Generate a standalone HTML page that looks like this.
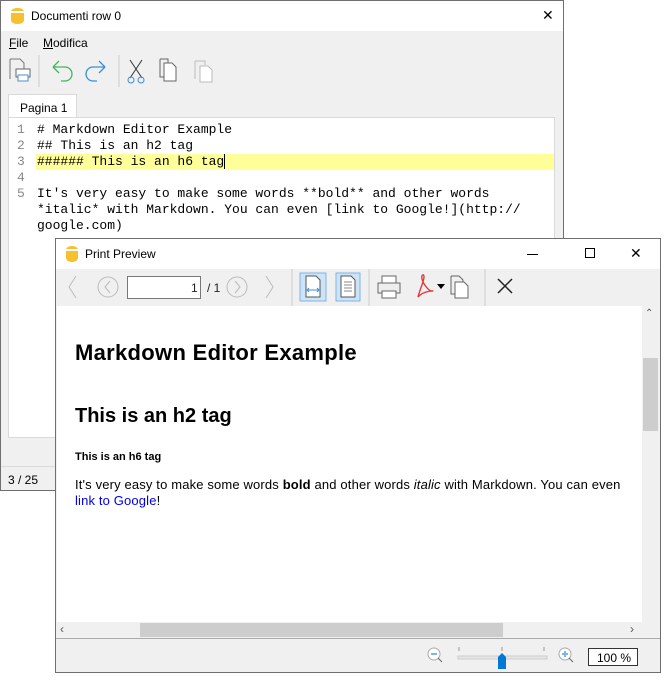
<!DOCTYPE html>
<html><head><style>
*{margin:0;padding:0;box-sizing:border-box}
body{width:665px;height:680px;background:#fff;position:relative;overflow:hidden;font-family:"Liberation Sans",sans-serif;font-size:12px;color:#000}
.abs{position:absolute}
.mono{font-family:"Liberation Mono",monospace;font-size:13px}
</style></head><body>
<!-- main window -->
<div class="abs" style="left:0;top:0;width:564px;height:491px;border:1px solid #6f6f6f;background:#f0f0f0">
 <div class="abs" style="left:0;top:0;width:562px;height:30px;background:#fff">
  <div class="abs" style="left:10px;top:7px;width:13px;height:16px;background:#f7c02e;border-radius:6px/4px"></div>
  <div class="abs" style="left:10px;top:10px;width:13px;height:2px;background:#fff"></div>
  <div class="abs" style="left:30px;top:8px;font-size:12px">Documenti row 0</div>
  <div class="abs" style="left:541px;top:6px;font-size:14px">✕</div>
 </div>
 <div class="abs" style="left:8px;top:35px"><u>F</u>ile</div>
 <div class="abs" style="left:42px;top:35px"><u>M</u>odifica</div>
 <svg class="abs" style="left:4px;top:54px" width="220" height="32">
  <path d="M5 4h10l4 4v8M5 4v20" fill="none" stroke="#777"/><rect x="11" y="14" width="14" height="8" fill="#fff" stroke="#666"/><rect x="13" y="20" width="10" height="6" fill="#fff" stroke="#4a8fc9"/>
  <line x1="34" y1="0" x2="34" y2="32" stroke="#ccc"/>
  <path d="M48 12h12a7 7 0 0 1 0 14h-4M48 12l6-6M48 12l6 6" fill="none" stroke="#43b35e" stroke-width="1.3"/>
  <path d="M100 12h-12a7 7 0 0 0 0 14h4M100 12l-6-6M100 12l-6 6" fill="none" stroke="#3b8fd6" stroke-width="1.3"/>
  <line x1="114" y1="0" x2="114" y2="32" stroke="#ccc"/>
  <path d="M125 5l12 18M137 5l-12 18" stroke="#333"/><circle cx="126" cy="25" r="3" fill="none" stroke="#3b8fd6"/><circle cx="136" cy="25" r="3" fill="none" stroke="#3b8fd6"/>
  <path d="M155 4h8v4M155 4v18h4" fill="none" stroke="#666"/><path d="M159 8h8l4 4v14h-12z" fill="#fff" stroke="#666"/>
  <path d="M190 6h10v4M190 6v18" fill="none" stroke="#bbb"/><path d="M195 11h8l4 4v12h-12z" fill="#fff" stroke="#bbb"/>
 </svg>
 <div class="abs" style="left:7px;top:93px;width:69px;height:25px;background:#fff;border:1px solid #d9d9d9;border-bottom:none;padding:6px 0 0 11px;white-space:nowrap">Pagina 1</div>
 <div class="abs" style="left:7px;top:116px;width:547px;height:321px;background:#fff;border:1px solid #d9d9d9"></div>
 <div class="abs" style="left:35px;top:153px;width:518px;height:16px;background:#ffff99"></div>
 <div class="abs mono" style="left:16px;top:121px;line-height:16px;color:#888">1<br>2<br>3<br>4<br>5</div>
 <div class="abs mono" style="left:36px;top:121px;line-height:16px;white-space:pre"># Markdown Editor Example
## This is an h2 tag
###### This is an h6 tag<span style="border-left:1px solid #000"></span>

It's very easy to make some words **bold** and other words
*italic* with Markdown. You can even [link to Google!](http://
google.com)</div>
 <div class="abs" style="left:0;top:465px;width:562px;border-top:1px solid #d9d9d9"></div>
 <div class="abs" style="left:7px;top:472px">3 / 25</div>
</div>
<!-- preview window -->
<div class="abs" style="left:55px;top:238px;width:606px;height:435px;border:1px solid #6f6f6f;background:#f0f0f0">
 <div class="abs" style="left:0;top:0;width:604px;height:30px;background:#fff">
  <div class="abs" style="left:10px;top:7px;width:12px;height:16px;background:#f7c02e;border-radius:6px/4px"></div>
  <div class="abs" style="left:10px;top:10px;width:12px;height:2px;background:#fff"></div>
  <div class="abs" style="left:29px;top:8px">Print Preview</div>
  <div class="abs" style="left:471px;top:15px;width:11px;height:1px;background:#000"></div>
  <div class="abs" style="left:529px;top:9px;width:10px;height:10px;border:1px solid #000"></div>
  <div class="abs" style="left:574px;top:6px;font-size:14px">✕</div>
 </div>
 <svg class="abs" style="left:0;top:30px" width="604" height="37">
  <path d="M20 7l-7 11 7 11" fill="none" stroke="#bbb"/>
  <circle cx="52" cy="18" r="10" fill="none" stroke="#bbb"/><path d="M54 12l-5 6 5 6" fill="none" stroke="#bbb"/>
  <rect x="71.5" y="7.5" width="73" height="22" fill="#fff" stroke="#777"/>
  <text x="135" y="23" font-size="12" font-family="Liberation Sans" fill="#222">1</text>
  <text x="151" y="23" font-size="12" font-family="Liberation Sans" fill="#222">/ 1</text>
  <circle cx="181" cy="18" r="10" fill="none" stroke="#bbb"/><path d="M179 12l5 6-5 6" fill="none" stroke="#bbb"/>
  <path d="M210 7l7 11-7 11" fill="none" stroke="#bbb"/>
  <line x1="236" y1="0" x2="236" y2="37" stroke="#ccc"/>
  <rect x="244" y="4" width="26" height="28" fill="#cde4f7" stroke="#7eb4ea"/><path d="M250 7h10l4 4v17h-14z" fill="#fff" stroke="#555"/><path d="M251 21h12M251 21l2-2M251 21l2 2M263 21l-2-2M263 21l-2 2" stroke="#3b8fd6"/>
  <rect x="280" y="4" width="24" height="28" fill="#cde4f7" stroke="#7eb4ea"/><path d="M285 7h10l4 4v17h-14z" fill="#fff" stroke="#555"/><path d="M288 13h8M288 16h8M288 19h8M288 22h8" stroke="#888"/>
  <line x1="313" y1="0" x2="313" y2="37" stroke="#ccc"/>
  <rect x="322" y="14" width="22" height="10" fill="#eee" stroke="#666"/><rect x="326" y="7" width="14" height="7" fill="#fff" stroke="#666"/><rect x="326" y="22" width="14" height="7" fill="#fff" stroke="#666"/>
  <path d="M362 28c2-8 6-16 6-20s-3-2-2 2 6 12 10 12-8-1-14 6z" fill="none" stroke="#e03a3a" stroke-width="1.4"/>
  <path d="M381 15h8l-4 5z" fill="#000"/>
  <path d="M395 7h8l4 4v3M395 7v18h4" fill="none" stroke="#666"/><path d="M399 13h9l4 4v12h-13z" fill="#fff" stroke="#666"/>
  <line x1="429" y1="0" x2="429" y2="37" stroke="#ccc"/>
  <path d="M442 10l14 14M456 10l-14 14" stroke="#222" stroke-width="1.5"/>
 </svg>
 <div class="abs" style="left:1px;top:67px;width:585px;height:316px;background:#fff">
  <div class="abs" style="left:18px;top:34px;font-size:22px;font-weight:bold;letter-spacing:0.3px">Markdown Editor Example</div>
  <div class="abs" style="left:18px;top:99px;font-size:20px;font-weight:bold">This is an h2 tag</div>
  <div class="abs" style="left:18px;top:145px;font-size:11px;font-weight:bold">This is an h6 tag</div>
  <div class="abs" style="left:18px;top:171px;font-size:13px;line-height:16px;width:555px;letter-spacing:0.15px">It's very easy to make some words <b>bold</b> and other words <i>italic</i> with Markdown. You can even <span style="color:#00e">link to Google</span>!</div>
 </div>
 <div class="abs" style="left:586px;top:67px;width:17px;height:316px;background:#f0f0f0">
  <div class="abs" style="left:3px;top:2px;font-size:10px;color:#555">⌃</div>
  <div class="abs" style="left:1px;top:52px;width:15px;height:73px;background:#cdcdcd"></div>
 </div>
 <div class="abs" style="left:1px;top:383px;width:585px;height:16px;background:#f0f0f0">
  <div class="abs" style="left:83px;top:1px;width:363px;height:14px;background:#cdcdcd"></div>
  <div class="abs" style="left:3px;top:0;font-size:12px;color:#555">‹</div>
  <div class="abs" style="left:573px;top:0;font-size:12px;color:#555">›</div>
 </div>
 <div class="abs" style="left:0;top:399px;width:604px;border-top:1px solid #aaa"></div>
 <svg class="abs" style="left:370px;top:405px" width="230" height="26">
  <circle cx="8" cy="10" r="6" fill="#fff" stroke="#aaa"/><path d="M5 10h6" stroke="#7eb4ea" stroke-width="2"/><path d="M12 14l4 4" stroke="#666"/>
  <rect x="32" y="12" width="89" height="3" fill="#e6e6e6" stroke="#ccc"/>
  <path d="M33 3v4M76 3v4M118 3v4" stroke="#999"/>
  <path d="M72 13l4-4 4 4v12h-8z" fill="#0078d7"/>
  <circle cx="139" cy="10" r="6" fill="#fff" stroke="#aaa"/><path d="M136 10h6M139 7v6" stroke="#7eb4ea" stroke-width="2"/><path d="M143 14l4 4" stroke="#666"/>
  <rect x="162.5" y="4.5" width="49" height="17" fill="#fff" stroke="#333"/>
  <text x="171" y="18" font-size="12" font-family="Liberation Sans">100 %</text>
 </svg>
</div>
</body></html>
